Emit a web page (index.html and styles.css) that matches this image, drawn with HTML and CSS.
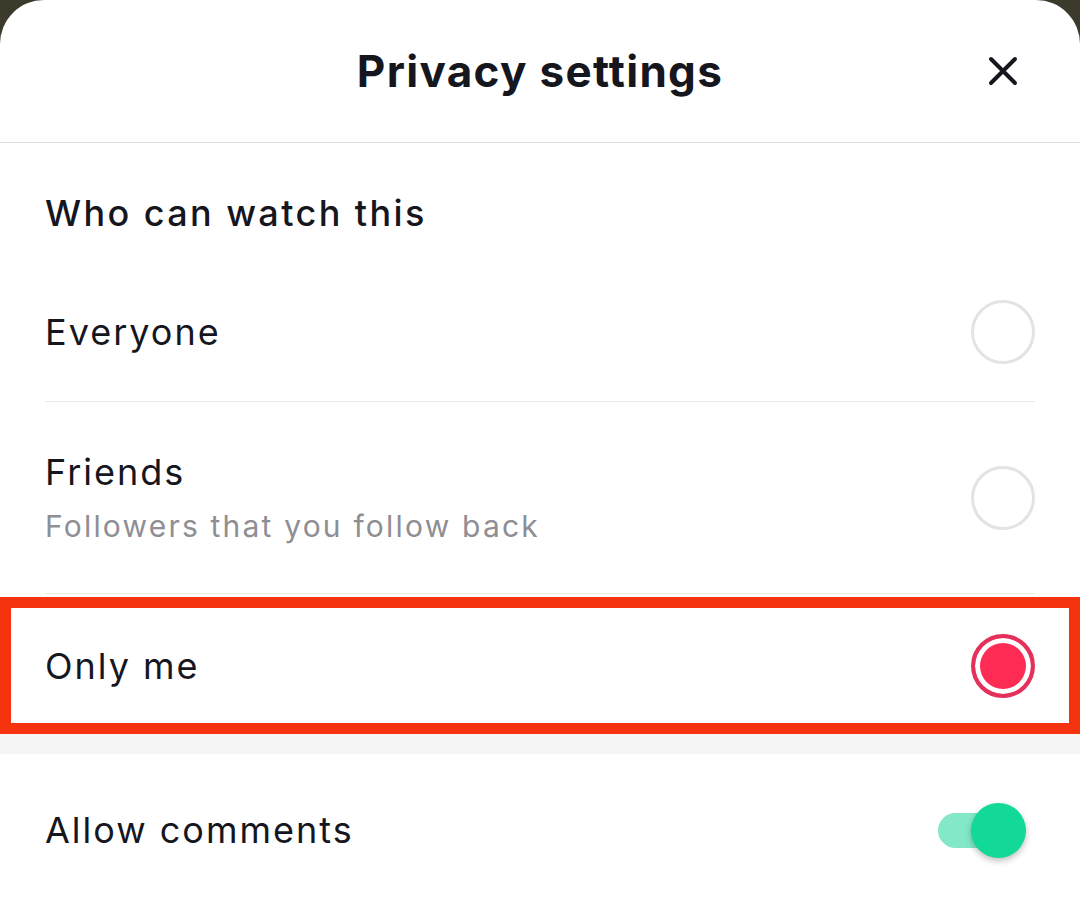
FILE: index.html
```html
<!DOCTYPE html>
<html lang="en">
<head>
    <meta charset="UTF-8">
    <meta name="viewport" content="width=device-width, initial-scale=1.0">
    <title>Privacy settings</title>
    <link rel="stylesheet" href="styles.css">
</head>
<body>
    <div class="sheet">
        <div class="header">
            <span></span>
            <h2>Privacy settings</h2>
            <button class="close" aria-label="Close">
                <svg width="30" height="30" viewBox="0 0 30 30">
                    <path d="M3 3 L27 27 M27 3 L3 27" stroke="#16161e" stroke-width="4" stroke-linecap="round"/>
                </svg>
            </button>
        </div>

        <h3 class="section-title">Who can watch this</h3>

        <div class="option">
            <div class="option-text">
                <div class="label">Everyone</div>
            </div>
            <span class="radio"></span>
        </div>

        <div class="option option-tall">
            <div class="option-text">
                <div class="label">Friends</div>
                <div class="hint">Followers that you follow back</div>
            </div>
            <span class="radio"></span>
        </div>

        <div class="option option-marked">
            <div class="option-text">
                <div class="label">Only me</div>
            </div>
            <span class="radio checked"></span>
        </div>

        <div class="gap"></div>

        <div class="switch-row">
            <div class="label">Allow comments</div>
            <span class="toggle on"><span class="knob"></span></span>
        </div>
    </div>
</body>
</html>
```

FILE: styles.css
```css
body {
    margin: 0;
    padding: 0;
    background: #3c3b2b;
    font-family: Inter, "Open Sans", sans-serif;
    color: #16161e;
}
.sheet {
    background: white;
    border-radius: 44px 44px 0 0;
    min-height: 922px;
    overflow: hidden;
}
.header {
    display: grid;
    grid-template-columns: 1fr auto 1fr;
    align-items: center;
    height: 142px;
    border-bottom: 1px solid #dcdcdc;
}
.header h2 {
    margin: 0;
    font-size: 44px;
    font-weight: 700;
    letter-spacing: 1.3px;
}
.close {
    justify-self: end;
    margin-right: 62px;
    width: 30px;
    height: 30px;
    padding: 0;
    border: none;
    background: none;
    display: flex;
}
.section-title {
    margin: 0;
    padding: 48px 45px 28px;
    font-size: 36px;
    line-height: 44px;
    font-weight: 500;
    letter-spacing: 2.4px;
}
.option {
    display: flex;
    align-items: center;
    justify-content: space-between;
    height: 138px;
    margin: 0 45px;
    border-bottom: 1px solid #e8e8e8;
}
.option-tall {
    height: 191px;
}
.option-text {
    display: flex;
    flex-direction: column;
}
.label {
    font-size: 36px;
    line-height: 44px;
    letter-spacing: 2px;
}
.hint {
    margin-top: 12px;
    font-size: 30px;
    line-height: 40px;
    letter-spacing: 2.2px;
    color: #8e8e93;
}
.option-marked {
    margin: 3px 0 0;
    height: 137px;
    box-sizing: border-box;
    border: 11px solid #f5330f;
    padding: 0 34px;
}
.radio {
    width: 64px;
    height: 64px;
    box-sizing: border-box;
    border: 3px solid #e3e3e3;
    border-radius: 50%;
}
.radio.checked {
    border: 4px solid #e4315b;
    background: #fe2c55;
    box-shadow: inset 0 0 0 5px white;
}
.gap {
    height: 20px;
    background: #f5f5f5;
}
.switch-row {
    display: flex;
    align-items: center;
    justify-content: space-between;
    height: 152px;
    padding: 0 70px 0 45px;
}
.toggle {
    position: relative;
    width: 72px;
    height: 35px;
    border-radius: 18px;
    background: #82e8c8;
}
.toggle .knob {
    position: absolute;
    top: -10px;
    right: -16px;
    width: 55px;
    height: 55px;
    border-radius: 50%;
    background: #12d898;
    box-shadow: 0 3px 6px rgba(0, 0, 0, 0.25);
}
```
